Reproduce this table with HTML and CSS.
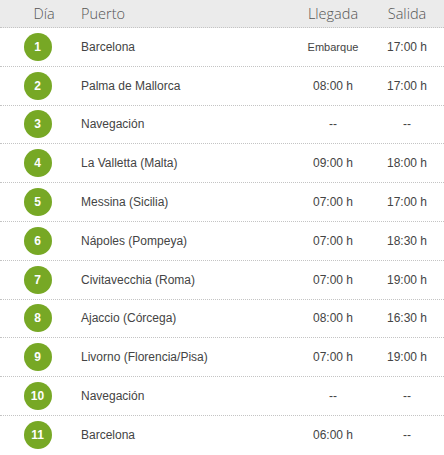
FILE: index.html
```html
<!DOCTYPE html>
<html lang="es">
<head>
<meta charset="utf-8">
<title>Itinerario</title>
<link rel="stylesheet" href="styles.css">
</head>
<body>
<div class="itin">
  <div class="row head">
    <div class="c-dia">Día</div>
    <div class="c-port">Puerto</div>
    <div class="c-time">Llegada</div>
    <div class="c-time">Salida</div>
  </div>
  <div class="row"><div class="c-dia"><span class="num">1</span></div><div class="c-port">Barcelona</div><div class="c-time small">Embarque</div><div class="c-time">17:00 h</div></div>
  <div class="row"><div class="c-dia"><span class="num">2</span></div><div class="c-port">Palma de Mallorca</div><div class="c-time">08:00 h</div><div class="c-time">17:00 h</div></div>
  <div class="row"><div class="c-dia"><span class="num">3</span></div><div class="c-port">Navegación</div><div class="c-time">--</div><div class="c-time">--</div></div>
  <div class="row"><div class="c-dia"><span class="num">4</span></div><div class="c-port">La Valletta (Malta)</div><div class="c-time">09:00 h</div><div class="c-time">18:00 h</div></div>
  <div class="row"><div class="c-dia"><span class="num">5</span></div><div class="c-port">Messina (Sicilia)</div><div class="c-time">07:00 h</div><div class="c-time">17:00 h</div></div>
  <div class="row"><div class="c-dia"><span class="num">6</span></div><div class="c-port">Nápoles (Pompeya)</div><div class="c-time">07:00 h</div><div class="c-time">18:30 h</div></div>
  <div class="row"><div class="c-dia"><span class="num">7</span></div><div class="c-port">Civitavecchia (Roma)</div><div class="c-time">07:00 h</div><div class="c-time">19:00 h</div></div>
  <div class="row"><div class="c-dia"><span class="num">8</span></div><div class="c-port">Ajaccio (Córcega)</div><div class="c-time">08:00 h</div><div class="c-time">16:30 h</div></div>
  <div class="row"><div class="c-dia"><span class="num">9</span></div><div class="c-port">Livorno (Florencia/Pisa)</div><div class="c-time">07:00 h</div><div class="c-time">19:00 h</div></div>
  <div class="row"><div class="c-dia"><span class="num">10</span></div><div class="c-port">Navegación</div><div class="c-time">--</div><div class="c-time">--</div></div>
  <div class="row"><div class="c-dia"><span class="num">11</span></div><div class="c-port">Barcelona</div><div class="c-time">06:00 h</div><div class="c-time">--</div></div>
</div>
</body>
</html>
```
FILE: styles.css
```css
html, body {
  margin: 0;
  padding: 0;
  background: #fff;
}
.itin {
  width: 444px;
  font-family: "Liberation Sans", Arial, sans-serif;
  font-size: 12px;
  color: #444;
}
.row {
  display: grid;
  grid-template-columns: 75px 1fr 74px 74px;
  align-items: center;
  height: 37.8px;
  border-bottom: 1px dotted #c4c4c4;
}
.row:last-child {
  border-bottom: none;
  height: 38.8px;
}
.row.head {
  height: 27px;
  background: #ebebeb;
  font-family: "Open Sans", sans-serif;
  font-weight: 300;
  font-size: 14.5px;
  color: #555;
}
.head .c-dia {
  text-align: left;
  padding-left: 13px;
}
.c-dia {
  display: flex;
  justify-content: center;
}
.c-port {
  padding-left: 6px;
}
.c-time {
  text-align: center;
}
.c-time.small {
  font-size: 11px;
}
.num {
  width: 28px;
  height: 28px;
  border-radius: 50%;
  background: #77a825;
  color: #fff;
  font-weight: bold;
  font-size: 12px;
  display: flex;
  align-items: center;
  justify-content: center;
}
```
